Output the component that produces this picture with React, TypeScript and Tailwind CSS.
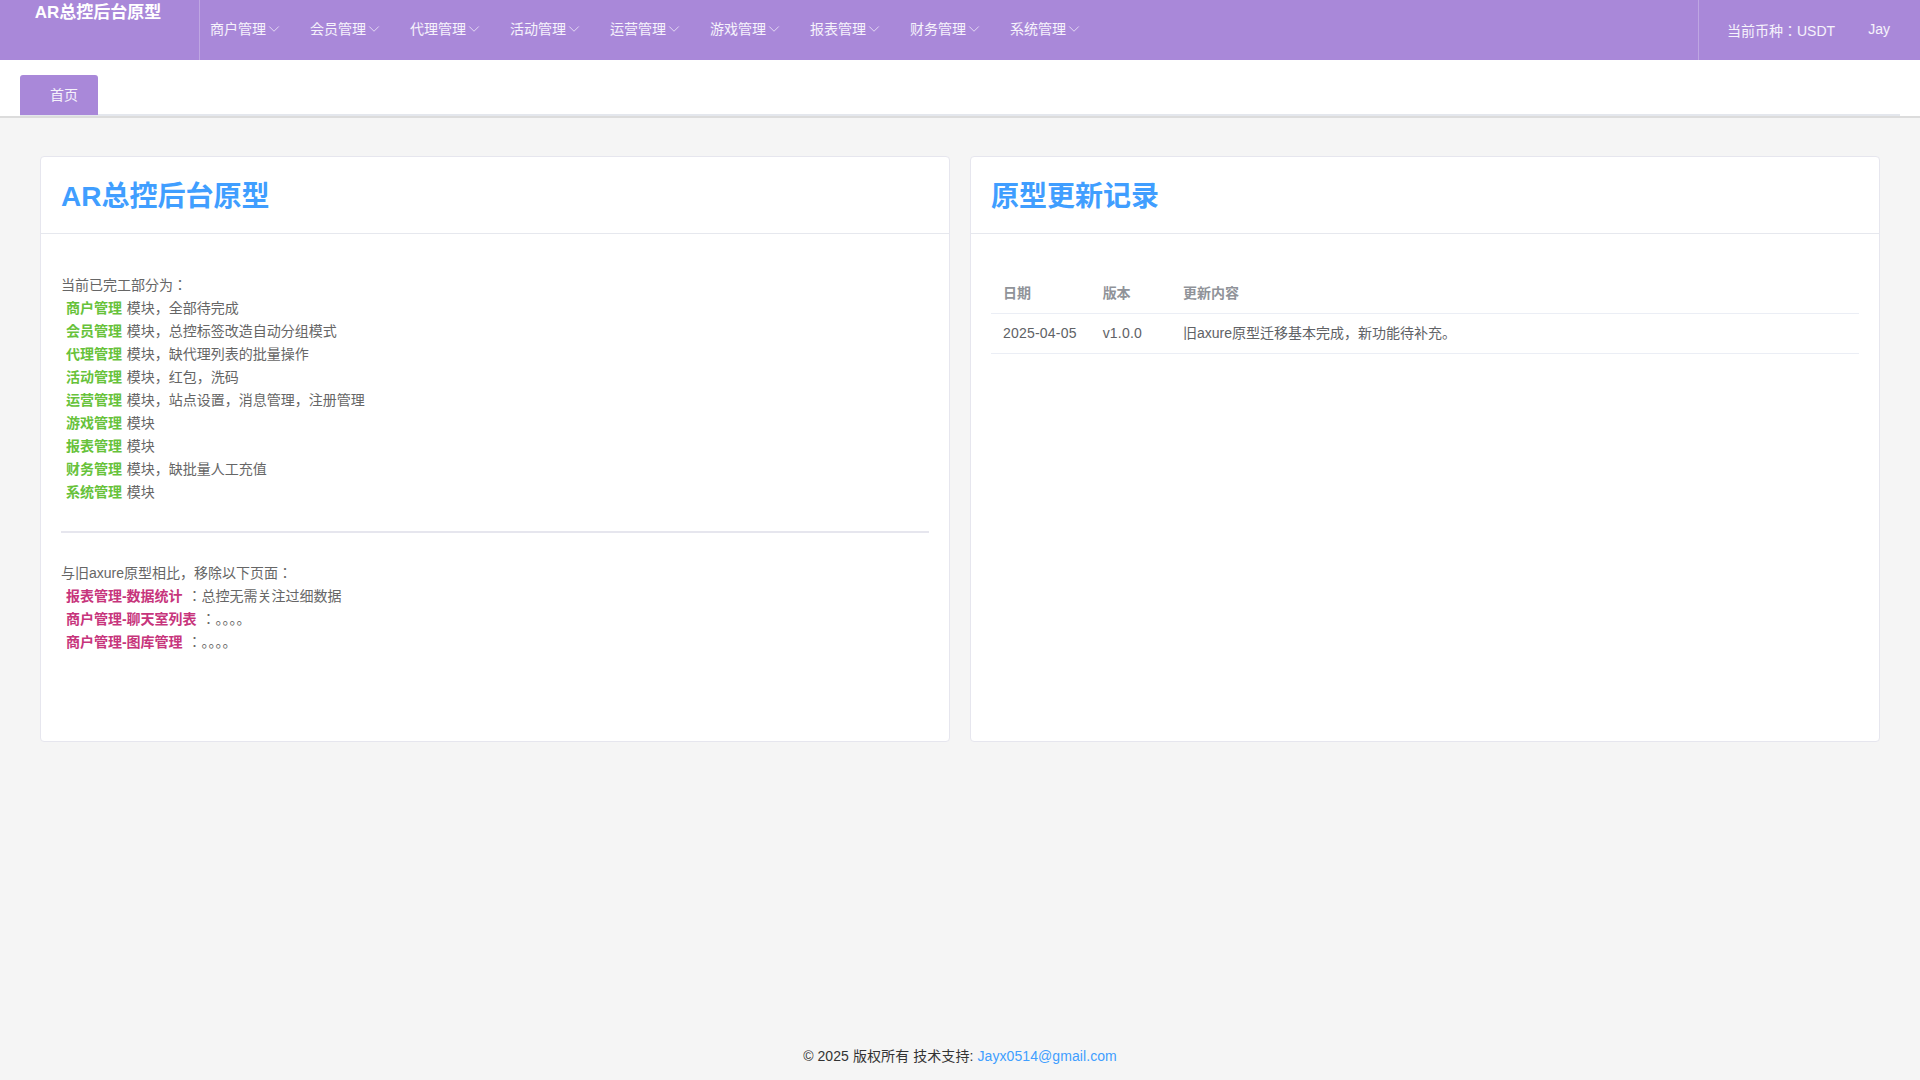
import React from "react";
import { ChevronDown } from "lucide-react";

const navItems = ["商户管理", "会员管理", "代理管理", "活动管理", "运营管理", "游戏管理", "报表管理", "财务管理", "系统管理"];

const doneItems = [
  ["商户管理", "模块，全部待完成"],
  ["会员管理", "模块，总控标签改造自动分组模式"],
  ["代理管理", "模块，缺代理列表的批量操作"],
  ["活动管理", "模块，红包，洗码"],
  ["运营管理", "模块，站点设置，消息管理，注册管理"],
  ["游戏管理", "模块"],
  ["报表管理", "模块"],
  ["财务管理", "模块，缺批量人工充值"],
  ["系统管理", "模块"],
];

const removedItems = [
  ["报表管理-数据统计", "：总控无需关注过细数据"],
  ["商户管理-聊天室列表", "：。。。。"],
  ["商户管理-图库管理", "：。。。。"],
];

const Card = ({ title, children }: { title: string; children: React.ReactNode }) => (
  <div className="h-[586px] rounded-[4px] border border-[#e6e6ee] bg-white">
    <div className="flex h-[77px] items-center border-b border-[#e6e8ee] px-5 pt-[3px]">
      <h2 className="text-[28px] font-bold text-[#409eff]">{title}</h2>
    </div>
    {children}
  </div>
);

export default function App() {
  return (
    <div className="flex min-h-screen flex-col bg-[#f5f5f5] font-['Liberation_Sans','Noto_Sans_CJK_JP',sans-serif] text-[14px] text-[#666]">
      {/* top bar */}
      <header className="flex h-[60px] bg-[#a988d9] text-white/90">
        <div className="h-full w-[200px] border-r border-white/25 pr-[3px] text-center text-[17px] leading-[25px] font-bold text-white">
          AR总控后台原型
        </div>
        <nav className="flex flex-1">
          {navItems.map((item) => (
            <div key={item} className="flex h-[58px] w-[100px] items-center pl-[10px]">
              <span>{item}</span>
              <ChevronDown size={18} strokeWidth={1} className="-ml-[1px]" />
            </div>
          ))}
        </nav>
        <div className="flex w-[222px] border-l border-white/25 pl-[28px]">
          <div className="flex h-[60px] items-center pt-[2px]">当前币种：USDT</div>
          <div className="ml-[33px] flex h-[58px] items-center">Jay</div>
        </div>
      </header>

      {/* tabs */}
      <div className="bg-white">
        <div className="flex h-[56px] items-end pt-[15px] pl-5">
          <div className="flex h-[41px] w-full max-w-[1880px] border-b-2 border-[#e4e7ed]">
            <div className="flex h-[40px] w-[78px] items-center rounded-t-[3px] bg-[#a988d9] pl-[30px] text-white/90">首页</div>
          </div>
        </div>
        <div className="h-[2px] bg-[#dcdcdc]" />
      </div>

      <main className="grid flex-1 grid-cols-2 content-start gap-5 px-10 pt-[38px]">
        <Card title="AR总控后台原型">
          <div className="px-5 pt-[40px] leading-[23px]">
            <div>当前已完工部分为：</div>
            {doneItems.map(([name, desc]) => (
              <div key={name}>
                {"\u00a0"}
                <span className="mx-[1px] font-bold text-[#67c23a]">{name}</span> {desc}
              </div>
            ))}
            <hr className="mt-[27px] mb-[29px] border-t-2 border-[#e6e6ee]" />
            <div>与旧axure原型相比，移除以下页面：</div>
            {removedItems.map(([name, desc]) => (
              <div key={name}>
                {"\u00a0"}
                <span className="mx-[1px] font-bold text-[#c7357c]">{name}</span> {desc}
              </div>
            ))}
          </div>
        </Card>
        <Card title="原型更新记录">
          <div className="px-5 pt-[39px]">
            <table className="w-full border-collapse text-left">
              <thead>
                <tr className="h-[40px] border-b border-[#ebeef5] text-[#909399]">
                  <th className="pt-[2px] pl-3 font-bold whitespace-nowrap">日期</th>
                  <th className="pt-[2px] font-bold whitespace-nowrap">版本</th>
                  <th className="w-full pt-[2px] font-bold">更新内容</th>
                </tr>
              </thead>
              <tbody>
                <tr className="h-[40px] border-b border-[#ebeef5] text-[#606266]">
                  <td className="pr-[26px] pl-3 tracking-[0.2px] whitespace-nowrap">2025-04-05</td>
                  <td className="pr-[41px] tracking-[0.2px] whitespace-nowrap">v1.0.0</td>
                  <td>旧axure原型迁移基本完成，新功能待补充。</td>
                </tr>
              </tbody>
            </table>
          </div>
        </Card>
      </main>

      <footer className="flex h-[50px] items-center justify-center pt-[2px] tracking-[0.08px] text-[#333]">
        © 2025 版权所有 技术支持:&nbsp;<a className="text-[#409eff]">Jayx0514@gmail.com</a>
      </footer>
    </div>
  );
}
